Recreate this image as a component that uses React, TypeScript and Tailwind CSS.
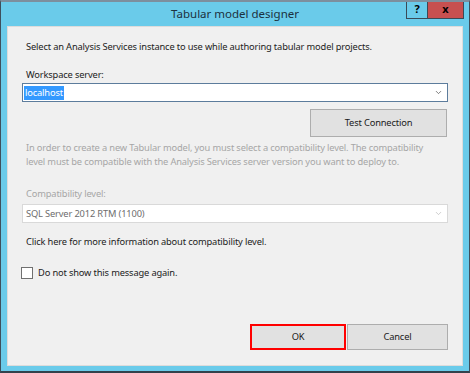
import { ChevronDown } from "lucide-react";

const font = { fontFamily: '"Segoe UI", "Noto Sans", "Open Sans", sans-serif' };

export default function App() {
  return (
    <div
      style={font}
      className="w-[470px] h-[373px] flex flex-col bg-[#6acbea] border-t-2 border-t-[#7d8f9e] border-x border-x-[#3e4f5c] border-b-2 border-b-[#33414c] overflow-hidden"
    >
      {/* title bar */}
      <div className="h-[24px] flex shrink-0">
        <div className="w-[63px]" />
        <div className="flex-1 text-center text-[11.5px] leading-[24px] text-[#1c3140]">
          Tabular model designer
        </div>
        <div className="flex items-start mr-[5px] -mt-[2px]">
          <div className="w-[22px] h-[19px] border border-[#3a4a57] bg-[#6acbea] flex items-center justify-center text-[11px] font-bold text-black">
            ?
          </div>
          <div className="w-[36px] h-[19px] border border-l-0 border-[#3a4a57] bg-[#c75050] flex items-center justify-center text-[11px] font-bold text-black">
            x
          </div>
        </div>
      </div>

      {/* client area */}
      <div className="flex-1 mx-[6px] mb-[5px] bg-[#f0f0f0] border border-[#dcdcdc] flex flex-col px-[14px] text-[9.3px] tracking-[-0.15px] text-[#222]">
        <div className="mt-[12px] ml-[4px] leading-[15px]">
          Select an Analysis Services instance to use while authoring tabular model projects.
        </div>
        <div className="mt-[13px] ml-[4px] leading-[15px]">Workspace server:</div>
        <div className="mt-[1px] h-[19px] bg-white border border-[#5c7c9c] flex items-center pl-[1px] pr-[4px]">
          <span className="bg-[#3399ff] text-white leading-[14px] px-[1px]">localhost</span>
          <span className="flex-1" />
          <ChevronDown size={9} strokeWidth={2} className="text-[#555]" />
        </div>
        <div className="mt-[7px] flex justify-end pr-[1px]">
          <div className="w-[137px] h-[28px] bg-[#e1e1e1] border border-[#adadad] flex items-center justify-center text-[#1a1a1a]">
            Test Connection
          </div>
        </div>
        <div className="mt-[4px] ml-[4px] leading-[14px] text-[#a6a6a6]">
          In order to create a new Tabular model, you must select a compatibility level. The compatibility
          <br />
          level must be compatible with the Analysis Services server version you want to deploy to.
        </div>
        <div className="mt-[18px] ml-[4px] leading-[14px] text-[#a6a6a6]">Compatibility level:</div>
        <div className="mt-[3px] h-[19px] bg-white border border-[#d9d9d9] flex items-center pl-[3px] pr-[4px] text-[#6d6d6d]">
          <span>SQL Server 2012 RTM (1100)</span>
          <span className="flex-1" />
          <ChevronDown size={9} strokeWidth={2} className="text-[#bdbdbd]" />
        </div>
        <div className="mt-[12px] ml-[4px] leading-[14px]">
          Click here for more information about compatibility level.
        </div>
        <div className="mt-[17px] flex items-center gap-[5px] -ml-[1px]">
          <div className="w-[12px] h-[12px] bg-white border border-[#707070]" />
          <span className="leading-[14px]">Do not show this message again.</span>
        </div>
        <div className="mt-auto mb-[15px] flex justify-end">
          <div className="w-[96px] h-[26px] border-2 border-[#ff0000] bg-[#e1e1e1] flex items-center justify-center text-[#1a1a1a]">
            OK
          </div>
          <div className="w-[101px] h-[26px] ml-[1px] border border-[#adadad] bg-[#e1e1e1] flex items-center justify-center text-[#1a1a1a]">
            Cancel
          </div>
        </div>
      </div>
    </div>
  );
}
